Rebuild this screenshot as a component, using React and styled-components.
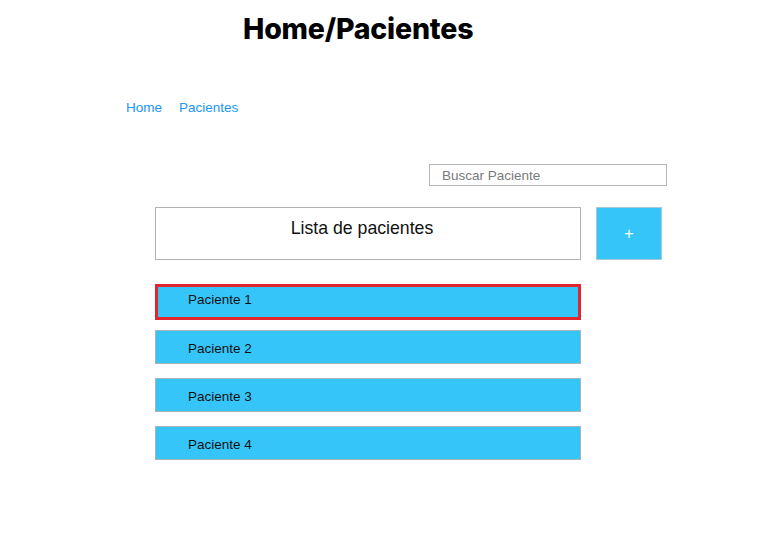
import React from "react";
import styled, { createGlobalStyle } from "styled-components";

const Global = createGlobalStyle`
  html, body { margin: 0; padding: 0; background: #fff; }
  body { font-family: "Liberation Sans", Arial, sans-serif; }
  * { box-sizing: border-box; }
`;

const Page = styled.div`
  width: 770px;
  height: 536px;
  display: flex;
  flex-direction: column;
`;

const Title = styled.h1`
  margin: 0;
  padding: 12px 0 0 243px;
  font-family: Inter, "Liberation Sans", sans-serif;
  font-weight: 800;
  font-size: 28.5px;
  letter-spacing: -0.2px;
  line-height: 34px;
  color: #000;
`;

const Crumbs = styled.nav`
  display: flex;
  gap: 17px;
  padding: 54px 0 0 126px;
`;

const Crumb = styled.a`
  font-size: 13.5px;
  line-height: 16px;
  color: #2196f3;
  text-decoration: none;
`;

const SearchRow = styled.div`
  display: flex;
  padding: 48px 0 0 429px;
`;

const Search = styled.input`
  width: 238px;
  height: 22px;
  border: 1px solid #b5b5b5;
  padding: 0 0 0 12px;
  font-family: "Liberation Sans", Arial, sans-serif;
  font-size: 13.5px;
  color: #333;
  outline: none;
  &::placeholder { color: #7a7a7a; }
`;

const Main = styled.div`
  display: flex;
  flex-direction: column;
  padding: 21px 0 0 155px;
`;

const HeaderRow = styled.div`
  display: flex;
  gap: 15px;
`;

const HeaderBox = styled.div`
  width: 426px;
  height: 53px;
  border: 1px solid #b3b3b3;
  text-align: center;
  padding: 10px 12px 0 0;
  font-size: 17.7px;
  line-height: 20px;
  color: #111;
`;

const AddButton = styled.button`
  width: 66px;
  height: 53px;
  border: 1px solid #a9c9d6;
  background: #36c5f9;
  color: #fff;
  font-family: "Liberation Sans", Arial, sans-serif;
  font-size: 16px;
  padding: 0;
  cursor: pointer;
`;

const List = styled.div`
  display: flex;
  flex-direction: column;
  gap: 14px;
  margin-top: 24px;
`;

const Row = styled.div`
  width: 426px;
  height: ${(p) => (p.$selected ? "36px" : "34px")};
  margin-bottom: ${(p) => (p.$selected ? "-4px" : "0")};
  background: #36c5f9;
  border: ${(p) => (p.$selected ? "3px solid #e3262e" : "1px solid #a9b4ba")};
  display: flex;
  align-items: center;
  padding-left: ${(p) => (p.$selected ? "30px" : "32px")};
  padding-bottom: ${(p) => (p.$selected ? "6px" : "0")};
  padding-top: ${(p) => (p.$selected ? "0" : "3px")};
  font-size: 13.5px;
  color: #111;
`;

const patients = ["Paciente 1", "Paciente 2", "Paciente 3", "Paciente 4"];

export default function App() {
  return (
    <Page>
      <Global />
      <Title>Home/Pacientes</Title>
      <Crumbs>
        <Crumb href="#">Home</Crumb>
        <Crumb href="#">Pacientes</Crumb>
      </Crumbs>
      <SearchRow>
        <Search placeholder="Buscar Paciente" />
      </SearchRow>
      <Main>
        <HeaderRow>
          <HeaderBox>Lista de pacientes</HeaderBox>
          <AddButton>+</AddButton>
        </HeaderRow>
        <List>
          {patients.map((p, i) => (
            <Row key={p} $selected={i === 0}>
              {p}
            </Row>
          ))}
        </List>
      </Main>
    </Page>
  );
}
